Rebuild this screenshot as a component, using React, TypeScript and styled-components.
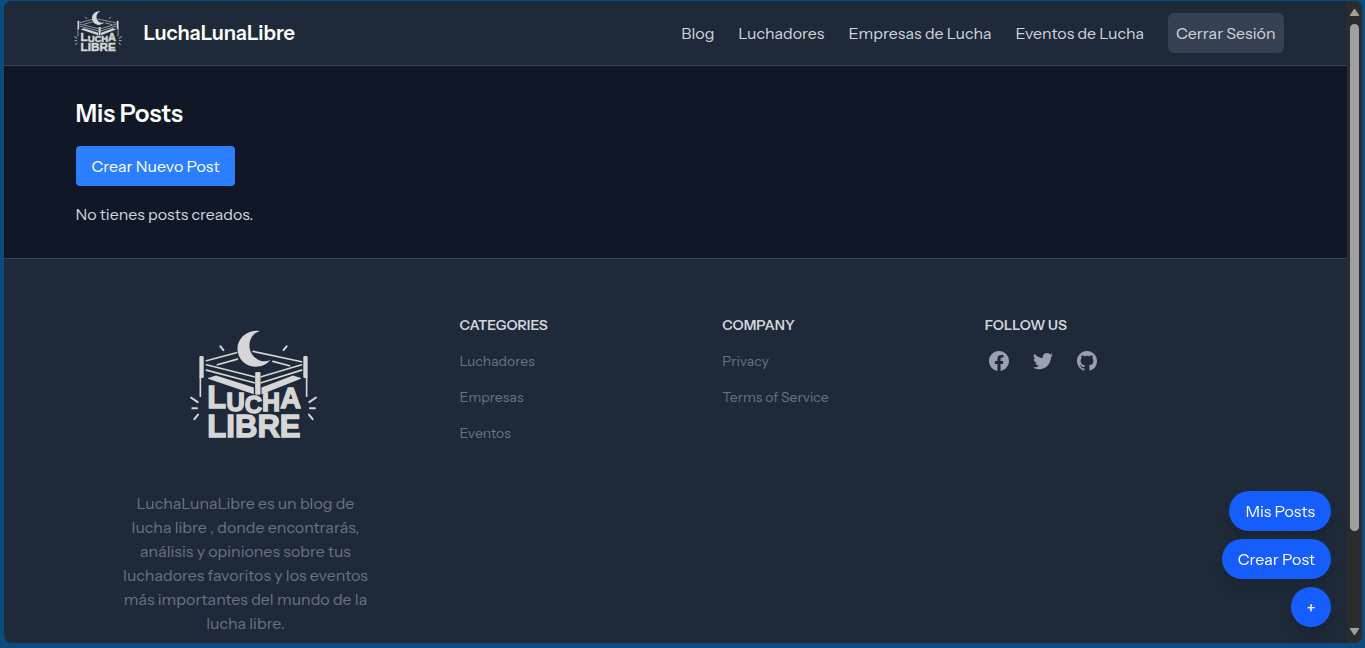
import React from "react";
import styled, { createGlobalStyle, css } from "styled-components";

const GlobalStyle = createGlobalStyle`
  *, *::before, *::after { box-sizing: border-box; }
  body {
    margin: 0;
    background: #0b4b7e;
    color: #d1d5dc;
    font-family: "Instrument Sans", "Liberation Sans", Arial, sans-serif;
    font-size: 16px;
    line-height: 24px;
  }
  h1, h2, p, ul { margin: 0; padding: 0; }
  ul { list-style: none; }
  a { color: inherit; text-decoration: none; }
  button { font: inherit; border: 0; cursor: pointer; }
`;

const Shell = styled.div`
  height: 100vh;
  padding: 1px 3px 5px 4px;
`;

const Viewport = styled.div`
  display: flex;
  height: 100%;
  overflow: hidden;
  border-radius: 8px;
  background: #1e2939;
`;

const Page = styled.div`
  flex: 1;
  min-width: 0;
  overflow: hidden;
`;

const ScrollTrack = styled.div`
  display: flex;
  flex-direction: column;
  align-items: center;
  width: 15px;
  padding: 8px 0;
  background: #2c2c2c;
`;

const ScrollThumb = styled.div`
  width: 9px;
  height: 81%;
  margin: 8px 0 auto;
  border-radius: 5px;
  background: #9f9f9f;
`;

const ScrollArrow = styled.svg`
  display: block;
  width: 9px;
  height: 7px;
  fill: #9f9f9f;
`;

const Header = styled.header`
  background: #1e2939;
  border-bottom: 1px solid #364153;
`;

const Container = styled.div`
  max-width: 1280px;
  margin: 0 auto;
  padding: 0 40px;
`;

const Bar = styled(Container)`
  display: flex;
  align-items: center;
  justify-content: space-between;
  height: 64px;
  padding: 0 32px 0 38px;
`;

const Brand = styled.a`
  display: flex;
  align-items: center;
  gap: 22px;
  color: #fff;
  font-size: 20px;
  font-weight: 600;
  line-height: 28px;
`;

const BrandLogo = styled.span`
  padding-bottom: 4px;
`;

const Nav = styled.nav`
  display: flex;
  align-items: center;
  gap: 24px;
`;

const LogoutButton = styled.button`
  height: 40px;
  padding: 0 8px;
  border-radius: 6px;
  background: #364153;
  color: #d1d5dc;
`;

const Main = styled.main`
  background: #101828;
`;

const Posts = styled(Container)`
  display: flex;
  flex-direction: column;
  align-items: flex-start;
  gap: 16px;
  padding-top: 32px;
  padding-bottom: 32px;
`;

const Title = styled.h1`
  color: #fff;
  font-size: 24px;
  font-weight: 600;
  line-height: 32px;
`;

const PrimaryButton = styled.button`
  height: 40px;
  padding: 0 16px;
  border-radius: 4px;
  background: #2b7fff;
  color: #fff;
`;

const Footer = styled.footer`
  border-top: 1px solid #364153;
`;

const FooterInner = styled.div`
  display: flex;
  gap: 86px;
  max-width: 1280px;
  margin: 0 auto;
  padding: 56px 68px 96px 82px;
`;

const About = styled.div`
  display: flex;
  flex-direction: column;
  align-items: center;
  gap: 53px;
  width: 256px;
  padding-top: 15px;
  color: #6a7282;
  text-align: center;
`;

const AboutLogo = styled.div`
  padding-left: 16px;
`;

const Columns = styled.div`
  flex: 1;
  display: grid;
  grid-template-columns: repeat(3, 1fr);
  align-items: start;
`;

const ColumnTitle = styled.h2`
  margin-bottom: 14px;
  color: #d1d5dc;
  font-size: 14px;
  font-weight: 600;
  line-height: 20px;
`;

const LinkList = styled.ul`
  display: grid;
  gap: 12px;
  color: #6a7282;
  font-size: 14px;
`;

const Social = styled.div`
  display: flex;
  gap: 20px;
  padding-left: 2px;
  color: #99a1af;
`;

const SocialLink = styled.a`
  display: block;
  height: 24px;
`;

const SocialIcon = styled.svg`
  display: block;
  width: 24px;
  height: 24px;
  fill: currentColor;
`;

const FloatingMenu = styled.div`
  position: fixed;
  right: 34px;
  bottom: 21px;
  display: flex;
  flex-direction: column;
  align-items: flex-end;
  gap: 8px;
`;

const FloatingButton = styled.button<{ $round?: boolean }>`
  height: 40px;
  padding: 0 16px;
  border-radius: 20px;
  background: #155dfc;
  color: #fff;
  box-shadow: 0 10px 15px -3px rgba(0, 0, 0, 0.1), 0 4px 6px -4px rgba(0, 0, 0, 0.1);
  ${(p) =>
    p.$round &&
    css`
      width: 40px;
      padding: 0;
      font-weight: 500;
    `}
`;

const LogoSvg = styled.svg<{ $width: number }>`
  display: block;
  width: ${(p) => p.$width}px;
  height: auto;
  overflow: visible;
  fill: #d6d6d6;
  stroke: #d6d6d6;
  stroke-linecap: round;

  text {
    font-family: "Liberation Sans", Arial, sans-serif;
    font-weight: 700;
    stroke-width: 4;
  }
`;

function Logo({ width }: { width: number }) {
  return (
    <LogoSvg $width={width} viewBox="30 30 380 322" role="img" aria-label="Lucha Libre">
      <path
        stroke="none"
        d="M239 33C205 27 172 52 172 86c0 32 26 54 55 54 18 0 34-8 43-20-10 4-21 5-31 1-20-8-31-25-31-44 0-21 12-38 31-44z"
      />
      <g fill="none" strokeWidth="5">
        <path d="M79 122 169 98M79 134 222 170M79 150 222 188M112 134 172 117" />
        <path d="M219 94 364 125M364 134 243 170M364 150 243 188M278 124 328 137" />
        <path d="M61 170V228M379 170V228" />
      </g>
      <g fill="none" strokeWidth="6">
        <path d="M121 79 130 90M319 79 310 90" />
        <path d="M33 232 53 246M37 264H51M43 297 54 283" />
        <path d="M407 232 387 246M404 264H389M397 297 386 283" />
      </g>
      <g stroke="none">
        <rect x="58" y="108" width="13" height="66" rx="4" />
        <rect x="369" y="108" width="13" height="66" rx="4" />
        <rect x="225" y="156" width="16" height="68" rx="3" />
        <path d="M84 174 108 166 221 202V222L84 176zM362 174 338 166 244 202V222L362 176z" />
      </g>
      <text x="82" y="264">
        <tspan fontSize="92">L</tspan>
        <tspan dy="8" fontSize="77">U</tspan>
        <tspan dy="6" fontSize="72">C</tspan>
        <tspan dy="-5" fontSize="75">H</tspan>
        <tspan dy="-9" fontSize="86">A</tspan>
      </text>
      <text x="82" y="349" fontSize="93">LIBRE</text>
    </LogoSvg>
  );
}

const socials = [
  {
    name: "Facebook",
    path: "M22 12c0-5.523-4.477-10-10-10S2 6.477 2 12c0 4.991 3.657 9.128 8.438 9.878v-6.987h-2.54V12h2.54V9.797c0-2.506 1.492-3.89 3.777-3.89 1.094 0 2.238.195 2.238.195v2.46h-1.26c-1.243 0-1.63.771-1.63 1.562V12h2.773l-.443 2.89h-2.33v6.988C18.343 21.128 22 16.991 22 12z",
  },
  {
    name: "Twitter",
    path: "M8.29 20.251c7.547 0 11.675-6.253 11.675-11.675 0-.178 0-.355-.012-.53A8.348 8.348 0 0022 5.92a8.19 8.19 0 01-2.357.646 4.118 4.118 0 001.804-2.27 8.224 8.224 0 01-2.605.996 4.107 4.107 0 00-6.993 3.743 11.65 11.65 0 01-8.457-4.287 4.106 4.106 0 001.27 5.477A4.072 4.072 0 012.8 9.713v.052a4.105 4.105 0 003.292 4.022 4.095 4.095 0 01-1.853.07 4.108 4.108 0 003.834 2.85A8.233 8.233 0 012 18.407a11.616 11.616 0 006.29 1.84",
  },
  {
    name: "GitHub",
    path: "M12 2C6.477 2 2 6.484 2 12.017c0 4.425 2.865 8.18 6.839 9.504.5.092.682-.217.682-.483 0-.237-.008-.868-.013-1.703-2.782.605-3.369-1.343-3.369-1.343-.454-1.158-1.11-1.466-1.11-1.466-.908-.62.069-.608.069-.608 1.003.07 1.531 1.032 1.531 1.032.892 1.53 2.341 1.088 2.91.832.092-.647.35-1.088.636-1.338-2.22-.253-4.555-1.113-4.555-4.951 0-1.093.39-1.988 1.029-2.688-.103-.253-.446-1.272.098-2.65 0 0 .84-.27 2.75 1.026A9.564 9.564 0 0112 6.844c.85.004 1.705.115 2.504.337 1.909-1.296 2.747-1.027 2.747-1.027.546 1.379.202 2.398.1 2.651.64.7 1.028 1.595 1.028 2.688 0 3.848-2.339 4.695-4.566 4.943.359.309.678.92.678 1.855 0 1.338-.012 2.419-.012 2.747 0 .268.18.58.688.482A10.019 10.019 0 0022 12.017C22 6.484 17.522 2 12 2z",
  },
];

const navLinks = ["Blog", "Luchadores", "Empresas de Lucha", "Eventos de Lucha"];

const linkColumns = [
  { title: "CATEGORIES", links: ["Luchadores", "Empresas", "Eventos"] },
  { title: "COMPANY", links: ["Privacy", "Terms of Service"] },
];

export default function App() {
  return (
    <Shell>
      <GlobalStyle />
      <Viewport>
        <Page>
          <Header>
            <Bar>
              <Brand href="#">
                <BrandLogo>
                  <Logo width={48} />
                </BrandLogo>
                LuchaLunaLibre
              </Brand>
              <Nav>
                {navLinks.map((label) => (
                  <a href="#" key={label}>{label}</a>
                ))}
                <LogoutButton type="button">Cerrar Sesión</LogoutButton>
              </Nav>
            </Bar>
          </Header>
          <Main>
            <Posts>
              <Title>Mis Posts</Title>
              <PrimaryButton type="button">Crear Nuevo Post</PrimaryButton>
              <p>No tienes posts creados.</p>
            </Posts>
          </Main>
          <Footer>
            <FooterInner>
              <About>
                <AboutLogo>
                  <Logo width={127} />
                </AboutLogo>
                <p>
                  LuchaLunaLibre es un blog de lucha libre , donde encontrarás, análisis y
                  opiniones sobre tus luchadores favoritos y los eventos más importantes del
                  mundo de la lucha libre.
                </p>
              </About>
              <Columns>
                {linkColumns.map((column) => (
                  <div key={column.title}>
                    <ColumnTitle>{column.title}</ColumnTitle>
                    <LinkList>
                      {column.links.map((label) => (
                        <li key={label}>
                          <a href="#">{label}</a>
                        </li>
                      ))}
                    </LinkList>
                  </div>
                ))}
                <div>
                  <ColumnTitle>FOLLOW US</ColumnTitle>
                  <Social>
                    {socials.map((social) => (
                      <SocialLink href="#" key={social.name} aria-label={social.name}>
                        <SocialIcon viewBox="0 0 24 24" aria-hidden="true">
                          <path d={social.path} />
                        </SocialIcon>
                      </SocialLink>
                    ))}
                  </Social>
                </div>
              </Columns>
            </FooterInner>
          </Footer>
        </Page>
        <ScrollTrack aria-hidden="true">
          <ScrollArrow viewBox="0 0 9 7">
            <path d="M4 0H5L9 6V7H0V6z" />
          </ScrollArrow>
          <ScrollThumb />
          <ScrollArrow viewBox="0 0 9 7">
            <path d="M0 0H9V1L5 7H4L0 1z" />
          </ScrollArrow>
        </ScrollTrack>
      </Viewport>
      <FloatingMenu>
        <FloatingButton type="button">Mis Posts</FloatingButton>
        <FloatingButton type="button">Crear Post</FloatingButton>
        <FloatingButton type="button" $round>+</FloatingButton>
      </FloatingMenu>
    </Shell>
  );
}
